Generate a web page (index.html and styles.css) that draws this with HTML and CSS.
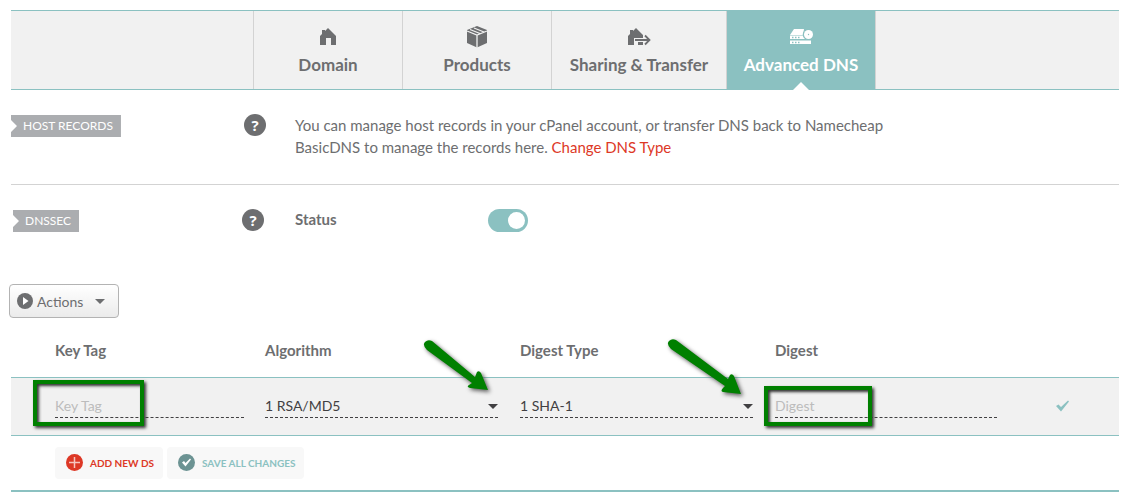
FILE: index.html
```
<!DOCTYPE html>
<html lang="en">
<head>
    <meta charset="UTF-8">
    <title>Advanced DNS</title>
    <link rel="stylesheet" href="styles.css">
</head>
<body>
<nav class="tabs">
    <a href="#domain" class="tab">
        <svg width="22" height="22" viewBox="0 0 22 22"><path d="M3 10 L5 8 V4 H8 V5 L11 2 L19 10 V19 H14 V12 H9 V19 H3z" fill="currentColor"/></svg>
        <span>Domain</span>
    </a>
    <a href="#products" class="tab">
        <svg width="22" height="22" viewBox="0 0 22 22"><path d="M11 0 L21 4 V17 L11 21.500 L1 17 V4z" fill="currentColor"/><path d="M1 5 L11 9 L21 5 M11 9 V22 M4 3.500 L14 7.500 M8 2 L18 6" fill="none" stroke="#f1f1f1" stroke-width="1.300"/></svg>
        <span>Products</span>
    </a>
    <a href="#sharing" class="tab tab-wide">
        <svg width="24" height="22" viewBox="0 0 24 22"><path d="M1 10 L3 8 V4 H6 V5 L9 2 L16 9 V12 H7 V19 H1z M11 16 H16 V19 H11z" fill="currentColor"/><path d="M8 14 H22 M18 9.500 L22.500 14 L18 18.500" fill="none" stroke="currentColor" stroke-width="1.800"/></svg>
        <span>Sharing &amp; Transfer</span>
    </a>
    <a href="#dns" class="tab active">
        <svg width="24" height="22" viewBox="0 0 24 22"><path d="M5 3 H15 L14 9 H1z M1 9.500 H22 V13 H1z M1 14.500 H22 V18 H1z" fill="currentColor"/><circle cx="19" cy="8.500" r="5.300" fill="#8bc1c1"/><circle cx="19.500" cy="8.500" r="4.500" fill="currentColor"/><circle cx="19.500" cy="8.500" r="0.700" fill="#8bc1c1"/><path d="M3 11.500 H12 M3 16.500 H12" stroke="#8bc1c1" stroke-width="1.500" stroke-dasharray="1.500 1.500"/></svg>
        <span>Advanced DNS</span>
    </a>
</nav>

<section class="row">
    <div><h2 class="badge">HOST RECORDS</h2></div>
    <button class="help" aria-label="Help: host records">?</button>
    <p class="text">You can manage host records in your cPanel account, or transfer DNS back to Namecheap BasicDNS to manage the records here. <a href="#change">Change DNS Type</a></p>
</section>

<section class="row row-dnssec">
    <div><h2 class="badge">DNSSEC</h2></div>
    <button class="help" aria-label="Help: DNSSEC">?</button>
    <div class="status">
        <label for="status">Status</label>
        <input id="status" class="switch" type="checkbox" checked>
    </div>
</section>

<button class="actions">
    <svg width="16" height="16" viewBox="0 0 16 16"><circle cx="8" cy="8" r="8" fill="#6d6e70"/><path d="M6 4 L11.500 8 L6 12z" fill="#fff"/></svg>
    <span>Actions</span>
    <i class="caret"></i>
</button>

<table class="records">
    <thead>
    <tr>
        <th class="col-key">Key Tag</th>
        <th class="col-type">Algorithm</th>
        <th class="col-type">Digest Type</th>
        <th class="col-digest">Digest</th>
        <th></th>
    </tr>
    </thead>
    <tbody>
    <tr>
        <td class="col-key">
            <input class="field field-key" type="text" placeholder="Key Tag" aria-label="Key Tag">
            <div class="mark mark-key"></div>
        </td>
        <td>
            <div class="select">
                <select class="field" aria-label="Algorithm"><option>1 RSA/MD5</option></select>
            </div>
            <svg class="arrow arrow-algorithm" width="72" height="60" viewBox="0 0 72 60"><path d="M10 4 L53 40 L55 35 Q57 33 59 36 L66 53 L48 51 Q44 50 47 48 L50 46 L5 13 Q0 8 3 5 Q6 2 10 4z" fill="#008000"/></svg>
        </td>
        <td>
            <div class="select">
                <select class="field" aria-label="Digest Type"><option>1 SHA-1</option></select>
            </div>
            <svg class="arrow arrow-type" width="80" height="65" viewBox="0 0 80 65"><path d="M10 4 L62 43 L64 39 Q66 37 68 40 L75 58 L57 56 Q54 55 57 52 L59 50 L5 13 Q0 8 3 5 Q6 2 10 4z" fill="#008000"/></svg>
        </td>
        <td>
            <input class="field field-digest" type="text" placeholder="Digest" aria-label="Digest">
            <div class="mark mark-digest"></div>
        </td>
        <td class="col-save">
            <button class="save" aria-label="Save record"><svg width="14" height="12" viewBox="0 0 14 12"><path d="M0 6 L2.500 4.500 L5 7 L12 0.500 L13 1.500 L5 11.500z" fill="#8bc1c1"/></svg></button>
        </td>
    </tr>
    </tbody>
</table>

<div class="buttons">
    <button class="btn btn-add">
        <svg width="17" height="17" viewBox="0 0 17 17"><circle cx="8.500" cy="8.500" r="8.500" fill="#dd3826"/><path d="M8.500 3 V14 M3 8.500 H14" stroke="#f6c5bf" stroke-width="1.500"/></svg>
        ADD NEW DS
    </button>
    <button class="btn btn-save">
        <svg width="17" height="17" viewBox="0 0 17 17"><circle cx="8.500" cy="8.500" r="8.500" fill="#6c9393"/><path d="M4 8.500 L6 7 L7.500 9 L12 4.500 L13 5.500 L7.500 12.500z" fill="#fff"/></svg>
        SAVE ALL CHANGES
    </button>
</div>
</body>
</html>
```
FILE: styles.css
```
* {
    box-sizing: border-box;
}
body {
    margin: 0;
    padding: 10px 16px 0 11px;
    font-family: Lato, "Open Sans", sans-serif;
    font-size: 14px;
    color: #6d6e70;
    background: #fff;
}
button, input, select {
    font-family: inherit;
    font-size: inherit;
    color: inherit;
}
.tabs {
    display: flex;
    height: 80px;
    padding-left: 242px;
    background: #f1f1f1;
    border-top: 1px solid #8bc1c1;
    border-bottom: 1px solid #8bc1c1;
}
.tab {
    display: flex;
    flex-direction: column;
    align-items: center;
    gap: 5px;
    width: 149px;
    padding-top: 15px;
    border-left: 1px solid #d3d3d3;
    font-size: 17px;
    line-height: 24px;
    font-weight: bold;
    color: #6d6e70;
    text-decoration: none;
}
.tab-wide {
    width: 175px;
}
.tab.active {
    position: relative;
    width: 150px;
    color: #fff;
    background: #8bc1c1;
    border-right: 1px solid #d3d3d3;
}
.tab.active::after {
    content: "";
    position: absolute;
    bottom: -1px;
    left: 66px;
    border: 8px solid transparent;
    border-top: 0;
    border-bottom-color: #fff;
}
.row {
    display: grid;
    grid-template-columns: 233px 51px 1fr;
    align-items: start;
    padding: 24px 0 26px;
    border-bottom: 1px solid #d3d3d3;
}
.row-dnssec {
    grid-template-columns: 231px 53px 1fr;
    padding: 24px 0 52px;
    border-bottom: 0;
}
.badge {
    display: inline-block;
    margin: 1px 0 0;
    padding: 0 8px 0 12px;
    font-size: 12px;
    line-height: 22px;
    font-weight: normal;
    color: #fff;
    background: #abadb0;
    clip-path: polygon(0 0, 100% 0, 100% 100%, 0 100%, 0 17px, 6px 11px, 0 5px);
}
.row-dnssec .badge {
    margin-left: 2px;
}
.help {
    width: 22px;
    height: 22px;
    padding: 0;
    border: 0;
    border-radius: 50%;
    font-family: "Open Sans", sans-serif;
    font-size: 15px;
    line-height: 22px;
    font-weight: bold;
    color: #fff;
    background: #6d6e70;
}
.text {
    max-width: 600px;
    margin: 0;
    font-size: 15px;
    line-height: 22px;
}
.text a {
    color: #dd3826;
    text-decoration: none;
}
.status {
    display: flex;
}
.status label {
    width: 193px;
    font-size: 15px;
    line-height: 20px;
    font-weight: bold;
}
.switch {
    appearance: none;
    width: 40px;
    height: 23px;
    margin: 0;
    padding: 3px;
    border-radius: 12px;
    background: #8bc1c1;
}
.switch::before {
    content: "";
    display: block;
    width: 17px;
    height: 17px;
    border-radius: 50%;
    background: #fff;
}
.switch:checked::before {
    margin-left: auto;
}
.actions {
    display: flex;
    align-items: center;
    gap: 4px;
    height: 34px;
    margin-left: -2px;
    padding: 0 13px 0 7px;
    border: 1px solid #b3b3b3;
    border-radius: 4px;
    background: linear-gradient(#fff, #ebebeb);
}
.caret {
    margin-left: 8px;
    border: 5px solid transparent;
    border-top-color: #6d6e70;
    border-bottom: 0;
}
.records {
    width: 100%;
    table-layout: fixed;
    border-collapse: collapse;
}
.records th {
    height: 59px;
    padding: 6px 0 0;
    font-size: 15px;
    text-align: left;
}
.records td {
    position: relative;
    height: 58px;
    padding: 0;
    background: #f1f1f1;
    border-top: 1px solid #8bc1c1;
    border-bottom: 1px solid #8bc1c1;
}
.records .col-key {
    width: 254px;
    padding-left: 44px;
}
.col-type {
    width: 255px;
}
.col-digest {
    width: 280px;
}
.field {
    display: block;
    width: 233px;
    height: 24px;
    padding: 0;
    border: 0;
    border-bottom: 1px dashed #414042;
    border-radius: 0;
    outline: none;
    appearance: none;
    color: #414042;
    background: transparent;
}
.field::placeholder {
    color: #bcbcbc;
}
.field-key {
    width: 189px;
}
.field-digest {
    width: 222px;
}
.select {
    position: relative;
    width: 233px;
}
.select::after {
    content: "";
    position: absolute;
    top: 10px;
    right: 0;
    border: 5px solid transparent;
    border-top-color: #414042;
    border-bottom: 0;
    pointer-events: none;
}
/* highlights over the fields to fill in */
.mark {
    position: absolute;
    border: 4px solid #008000;
    box-shadow: 2px 2px 3px #333, inset 2px 2px 3px #333;
    pointer-events: none;
}
.mark-key {
    top: 2px;
    left: 22px;
    width: 111px;
    height: 46px;
}
.mark-digest {
    top: 8px;
    left: -11px;
    width: 108px;
    height: 40px;
}
.arrow {
    position: absolute;
    filter: drop-shadow(2px 2px 2px #555);
    pointer-events: none;
}
.arrow-algorithm {
    top: -41px;
    left: 157px;
}
.arrow-type {
    top: -42px;
    left: 146px;
}
.records .col-save {
    padding-left: 1px;
}
.save {
    display: block;
    padding: 0;
    border: 0;
    background: none;
}
.buttons {
    display: flex;
    gap: 4px;
    padding: 11px 44px;
    border-bottom: 2px solid #8bc1c1;
}
.btn {
    display: flex;
    align-items: center;
    gap: 7px;
    height: 32px;
    padding: 0 9px 0 11px;
    border: 0;
    border-radius: 4px;
    font-size: 10px;
    font-weight: bold;
    background: #f8f8f8;
}
.btn-add {
    color: #dd3826;
}
.btn-save {
    color: #8bc1c1;
}
```
